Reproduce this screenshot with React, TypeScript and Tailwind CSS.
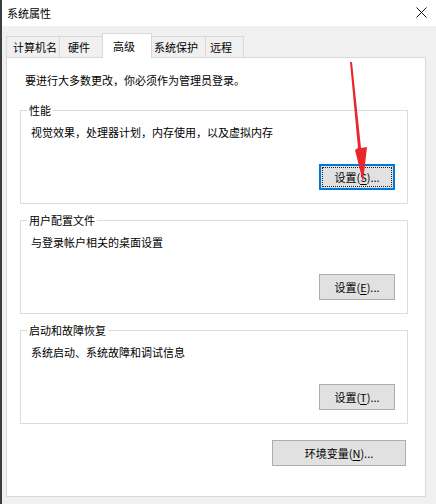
import { FC, ReactNode } from "react";

// Windows 10 "系统属性" dialog, 高级 tab

const Btn: FC<{ label: string; mn: string; focused?: boolean; wide?: boolean }> = ({ label, mn, focused, wide }) => (
    <div
        className={`relative flex items-center justify-center h-[26px] bg-[#e1e1e1] ${wide ? "w-[134px]" : "w-[76px]"} ${focused ? "border-2 border-[#0078d7]" : "border border-[#adadad]"}`}
    >
        {focused && <span className="absolute inset-[1px] border border-dotted border-[#222]" />}
        <span>
            {label}(<u className="underline-offset-2">{mn}</u>)...
        </span>
    </div>
);

const Group: FC<{ title: string; desc: string; children: ReactNode; className?: string }> = ({ title, desc, children, className }) => (
    <div className={`relative ml-[13px] w-[388px] h-[94px] border border-[#dcdcdc] pt-[13px] ${className ?? ""}`}>
        <span className="absolute -top-[9px] left-[6px] px-[2px] bg-white">{title}</span>
        <div className="pl-[10px]">{desc}</div>
        <div className="flex justify-end pr-[12px] mt-[24px]">{children}</div>
    </div>
);

type Tab = { name: string; w: string; pl: string; active?: boolean; last?: boolean };

const tabs: Tab[] = [
    { name: "计算机名", w: "w-[53px]", pl: "pl-[6px]" },
    { name: "硬件", w: "w-[43px]", pl: "pl-[8px]" },
    { name: "高级", w: "w-[50px]", pl: "pl-[10px]", active: true },
    { name: "系统保护", w: "w-[53px]", pl: "pl-[2px]" },
    { name: "远程", w: "w-[39px]", pl: "pl-[4px]", last: true },
];

export default function App() {
    return (
        <div className="relative w-[436px] h-[504px] overflow-hidden bg-[#f0f0f0] border-l-2 border-[#3c3c3c] text-[11px] leading-[16px] text-black font-['Microsoft_YaHei_UI','Noto_Sans_CJK_SC',sans-serif]">
            {/* TITLE BAR */}
            <div className="h-[26px] bg-white flex items-center justify-between pl-[5px] pr-[9px]">
                <span className="-mt-[1px]">系统属性</span>
                <svg width="11" height="11" viewBox="0 0 11 11" className="-mt-[2px]">
                    <path d="M0.5 0.5 L10.5 10.5 M10.5 0.5 L0.5 10.5" stroke="#111" strokeWidth="1" />
                </svg>
            </div>

            {/* TABS */}
            <div className="flex items-end h-[31px] pl-[4px]">
                {tabs.map((t) =>
                    t.active ? (
                        <div
                            key={t.name}
                            className={`relative z-10 -mb-px h-[25px] ${t.w} ${t.pl} flex items-center bg-white border border-b-0 border-[#d9d9d9]`}
                        >
                            {t.name}
                        </div>
                    ) : (
                        <div
                            key={t.name}
                            className={`h-[21px] ${t.w} ${t.pl} flex items-center border-t border-[#d9d9d9] ${t.name === "系统保护" ? "" : "border-l"} ${t.last ? "border-r" : ""}`}
                        >
                            {t.name}
                        </div>
                    )
                )}
            </div>

            {/* PANEL */}
            <div className="ml-[4px] w-[420px] h-[440px] bg-white border border-[#d9d9d9] pt-[14px]">
                <div className="pl-[18px]">要进行大多数更改，你必须作为管理员登录。</div>

                <Group title="性能" desc="视觉效果，处理器计划，内存使用，以及虚拟内存" className="mt-[22px]">
                    <Btn label="设置" mn="S" focused />
                </Group>

                <Group title="用户配置文件" desc="与登录帐户相关的桌面设置" className="mt-[16px]">
                    <Btn label="设置" mn="E" />
                </Group>

                <Group title="启动和故障恢复" desc="系统启动、系统故障和调试信息" className="mt-[16px]">
                    <Btn label="设置" mn="T" />
                </Group>

                <div className="flex justify-end pr-[19px] mt-[16px]">
                    <Btn label="环境变量" mn="N" wide />
                </div>
            </div>

            {/* red annotation arrow */}
            <svg className="absolute left-0 top-0 pointer-events-none" width="436" height="504" viewBox="0 0 436 504">
                <polygon points="348,62 350,62 359,148 365,147 361,182 353,150 356,148" fill="#e8262b" />
            </svg>
        </div>
    );
}
